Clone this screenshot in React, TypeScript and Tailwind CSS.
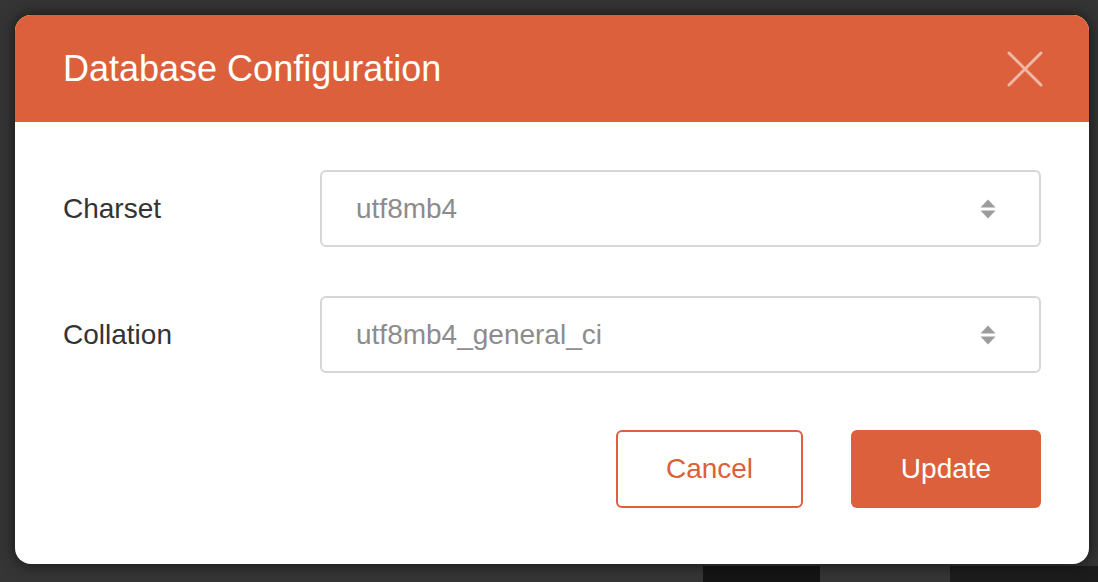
import { useState } from "react";

const CHARSETS = ["utf8mb4", "utf8", "latin1"];
const COLLATIONS = ["utf8mb4_general_ci", "utf8mb4_unicode_ci", "utf8mb4_bin"];

function SortArrows() {
  return (
    <svg width="16" height="22" viewBox="0 0 16 22" className="shrink-0">
      <path d="M8 1.5 L15.5 9.5 H0.5 Z" fill="#9c9c9c" />
      <path d="M8 20.5 L15.5 12.5 H0.5 Z" fill="#9c9c9c" />
    </svg>
  );
}

function Field({
  label,
  value,
  options,
  onChange,
}: {
  label: string;
  value: string;
  options: string[];
  onChange: (v: string) => void;
}) {
  return (
    <div className="flex items-center">
      <label className="w-[257px] shrink-0 text-[28px] text-[#333333]">{label}</label>
      <div className="relative flex h-[77px] flex-1 items-center rounded-[6px] border-2 border-[#d6d6d6] pl-[34px] pr-[43px]">
        <span className="flex-1 text-[28px] text-[#8c8c8c]">{value}</span>
        <SortArrows />
        <select
          value={value}
          onChange={(e) => onChange(e.target.value)}
          className="absolute inset-0 cursor-pointer opacity-0"
        >
          {options.map((o) => (
            <option key={o}>{o}</option>
          ))}
        </select>
      </div>
    </div>
  );
}

export default function App() {
  const [charset, setCharset] = useState("utf8mb4");
  const [collation, setCollation] = useState("utf8mb4_general_ci");

  return (
    <div
      className="relative h-[582px] w-full overflow-hidden bg-[#353535] pl-[15px] pt-[15px]"
      style={{ fontFamily: '"Liberation Sans", Arial, sans-serif' }}
    >
      {/* bits of the page behind the overlay */}
      <div className="absolute bottom-0 left-[703px] h-[16px] w-[117px] bg-[#151515]" />
      <div className="absolute bottom-0 left-[950px] h-[16px] w-[148px] bg-[#1c1c1c]" />

      <div className="relative flex h-[549px] w-[1074px] flex-col overflow-hidden rounded-[16px] bg-white shadow-[0_0_16px_rgba(0,0,0,0.65)]">
        <div className="flex h-[107px] shrink-0 items-center justify-between bg-[#dc603b] pl-[48px] pr-[46px]">
          <h1 className="text-[36px] font-normal text-white">Database Configuration</h1>
          <button aria-label="Close" className="text-white/55">
            <svg width="36" height="36" viewBox="0 0 36 36">
              <path d="M2 2 L34 34 M34 2 L2 34" stroke="currentColor" strokeWidth="3" strokeLinecap="round" />
            </svg>
          </button>
        </div>

        <div className="flex flex-1 flex-col px-[48px] pt-[48px]">
          <div className="flex flex-col gap-[49px]">
            <Field label="Charset" value={charset} options={CHARSETS} onChange={setCharset} />
            <Field label="Collation" value={collation} options={COLLATIONS} onChange={setCollation} />
          </div>
          <div className="mt-[57px] flex justify-end gap-[48px]">
            <button className="h-[78px] w-[187px] rounded-[6px] border-2 border-[#dc603b] text-[28px] text-[#dc603b]">
              Cancel
            </button>
            <button className="h-[78px] w-[190px] rounded-[6px] bg-[#dc603b] text-[28px] text-white">
              Update
            </button>
          </div>
        </div>
      </div>
    </div>
  );
}
